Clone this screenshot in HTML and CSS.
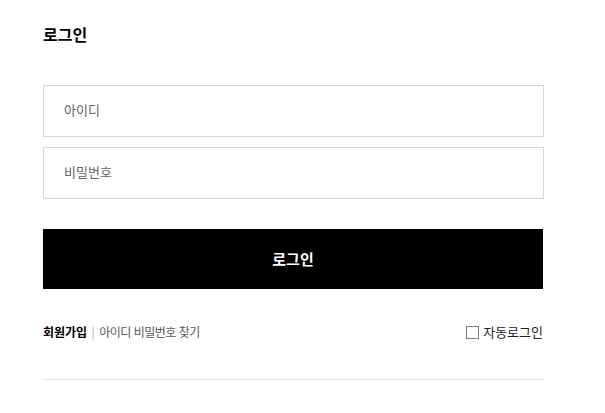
FILE: index.html
```html
<!DOCTYPE html>
<html lang="ko">
<head>
    <meta charset="UTF-8">
    <meta name="viewport" content="width=device-width, initial-scale=1.0">
    <title>로그인</title>
    <link rel="stylesheet" href="styles.css">
</head>
<body>
    <section class="login">
        <h1>로그인</h1>
        <form class="login-form">
            <input type="text" class="field" placeholder="아이디">
            <input type="password" class="field" placeholder="비밀번호">
            <button type="button" class="submit">로그인</button>
        </form>
        <div class="login-links">
            <div class="links-left">
                <a href="#" class="join">회원가입</a>
                <span class="bar">|</span>
                <a href="#" class="find">아이디 비밀번호 찾기</a>
            </div>
            <label class="auto">
                <input type="checkbox">
                <span>자동로그인</span>
            </label>
        </div>
        <hr class="divider">
    </section>
</body>
</html>
```

FILE: styles.css
```css
* {
    margin: 0;
    padding: 0;
    box-sizing: border-box;
    font-family: "Noto Sans CJK KR", "Noto Sans", sans-serif;
}

body {
    background-color: white;
    color: #000;
}

.login {
    width: 500px;
    margin-left: 43px;
    padding-top: 24px;
}

.login h1 {
    font-size: 16px;
    line-height: 20px;
    font-weight: bold;
    margin-bottom: 41px;
}

.login-form {
    display: flex;
    flex-direction: column;
    gap: 10px;
}

.field {
    width: 501px;
    height: 52px;
    border: 1px solid #d6d6d6;
    padding: 0 20px 4px;
    font-size: 13px;
    color: #333;
    outline: none;
}

.field::placeholder {
    color: #666;
}

.submit {
    margin-top: 20px;
    width: 500px;
    height: 60px;
    border: none;
    background-color: #000;
    color: white;
    font-size: 15px;
    font-weight: bold;
    padding-bottom: 2px;
    cursor: pointer;
}

.login-links {
    display: flex;
    justify-content: space-between;
    align-items: center;
    margin-top: 35px;
    line-height: 16px;
    font-size: 12px;
}

.login-links a {
    text-decoration: none;
}

.join {
    color: #000;
    font-weight: bold;
}

.bar {
    color: #aaa;
    margin: 0 1px;
}

.find {
    color: #555;
    letter-spacing: -0.5px;
}

.auto {
    display: flex;
    align-items: center;
    gap: 4px;
    font-size: 13px;
    color: #222;
}

.auto input {
    appearance: none;
    width: 13px;
    height: 13px;
    margin: 0;
    border: 1px solid #808080;
    background: white;
}

.divider {
    margin-top: 39px;
    border: none;
    border-top: 1px solid #e0e0e0;
}
```
